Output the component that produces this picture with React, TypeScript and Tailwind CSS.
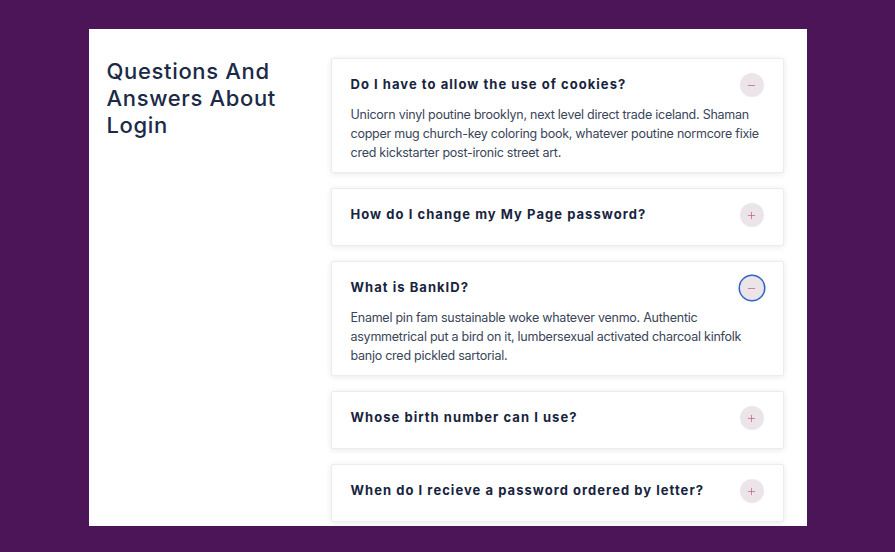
import { Minus, Plus } from "lucide-react";

interface Faq {
  question: string;
  answer?: string;
  focused?: boolean;
}

const faqs: Faq[] = [
  {
    question: "Do I have to allow the use of cookies?",
    answer:
      "Unicorn vinyl poutine brooklyn, next level direct trade iceland. Shaman copper mug church-key coloring book, whatever poutine normcore fixie cred kickstarter post-ironic street art.",
  },
  { question: "How do I change my My Page password?" },
  {
    question: "What is BankID?",
    answer:
      "Enamel pin fam sustainable woke whatever venmo. Authentic asymmetrical put a bird on it, lumbersexual activated charcoal kinfolk banjo cred pickled sartorial.",
    focused: true,
  },
  { question: "Whose birth number can I use?" },
  { question: "When do I recieve a password ordered by letter?" },
];

const FaqCard = ({ faq }: { faq: Faq }) => {
  const open = !!faq.answer;
  return (
    <div className="bg-white border border-[#ececee] rounded-[2px] shadow-[0_1px_6px_rgba(0,0,0,0.09)] pl-[19px] pr-[19px] pt-[14px]">
      <div className="flex items-center justify-between h-6">
        <h3 className="text-[13px] font-bold tracking-[0.08em] text-[#18243d]">{faq.question}</h3>
        <span
          className={`w-6 h-6 rounded-full bg-[#ebe5ea] flex items-center justify-center text-[#c2587a] ${
            faq.focused ? "ring-[1.5px] ring-[#2f63c9]" : ""
          }`}
        >
          {open ? <Minus size={11} strokeWidth={1.5} /> : <Plus size={11} strokeWidth={1.5} />}
        </span>
      </div>
      {open ? (
        <p className="mt-[8px] pb-[10px] text-[12.5px] leading-[19px] tracking-[-0.02em] text-[#3a4558]">
          {faq.answer}
        </p>
      ) : (
        <div className="h-[18px]" />
      )}
    </div>
  );
};

export default function App() {
  return (
    <div
      className="w-full h-[552px] bg-[#4b1558] flex justify-center pt-[29px] overflow-hidden"
      style={{ fontFamily: "Inter, 'Noto Sans', sans-serif" }}
    >
      <div className="w-[718px] h-[497px] bg-white flex pl-[18px] pr-[23px] pt-[29px] overflow-hidden">
        <div className="w-[224px] shrink-0 pr-5">
          <h2 className="text-[22px] leading-[27px] font-medium tracking-[0.03em] text-[#1b2a47]">
            Questions And Answers About Login
          </h2>
        </div>
        <div className="flex-1 flex flex-col gap-[15px]">
          {faqs.map((f) => (
            <FaqCard key={f.question} faq={f} />
          ))}
        </div>
      </div>
    </div>
  );
}
